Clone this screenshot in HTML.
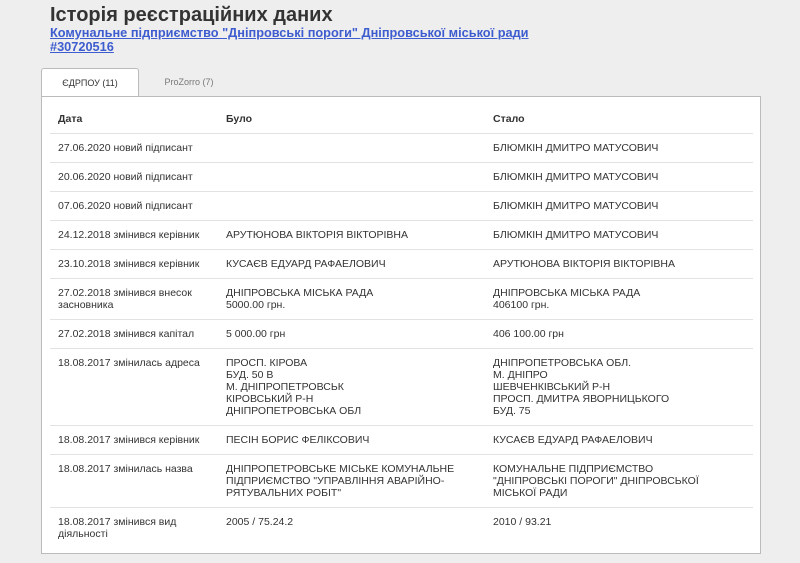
<!DOCTYPE html>
<html><head><meta charset="utf-8"><style>
body{margin:0;background:#eeeeee;font-family:"Liberation Sans",Arial,sans-serif;width:800px;height:563px;overflow:hidden;position:relative}
h1{position:absolute;left:50px;top:3px;margin:0;font-size:20px;font-weight:bold;color:#333;line-height:24px}
.lnk{position:absolute;left:50px;top:26px;font-size:12.75px;font-weight:bold;color:#3d5ccf;text-decoration:underline;line-height:14px}
.tab{position:absolute;top:68px;height:28px;font-size:9px;color:#555;line-height:28px;text-align:center}
.t1{left:41px;width:96px;background:#fff;border:1px solid #bbb;border-bottom:none;border-radius:3px 3px 0 0;color:#333}
.t2{left:140px;width:98px;color:#777}
.panel{position:absolute;left:41px;top:96px;width:718px;height:456px;background:#fff;border:1px solid #bbb}
table{position:absolute;left:8px;top:8px;width:703px;border-collapse:collapse;font-size:10.5px;color:#333}
td,th{padding:8px 8px 8px 8px;line-height:12px;vertical-align:top;text-align:left;border-bottom:1px solid #e2e2e2}
th{font-weight:bold;padding:8px 8px 8px 8px}
tr:last-child td{border-bottom:none}
</style></head><body>
<h1>Історія реєстраційних даних</h1>
<div class="lnk">Комунальне підприємство "Дніпровські пороги" Дніпровської міської ради<br>#30720516</div>
<div class="tab t1">ЄДРПОУ (11)</div>
<div class="tab t2">ProZorro (7)</div>
<div class="panel"><table>
<colgroup><col style="width:168px"><col style="width:267px"><col></colgroup>
<tr><th>Дата</th><th>Було</th><th>Стало</th></tr>
<tr><td>27.06.2020 новий підписант</td><td></td><td>БЛЮМКІН ДМИТРО МАТУСОВИЧ</td></tr>
<tr><td>20.06.2020 новий підписант</td><td></td><td>БЛЮМКІН ДМИТРО МАТУСОВИЧ</td></tr>
<tr><td>07.06.2020 новий підписант</td><td></td><td>БЛЮМКІН ДМИТРО МАТУСОВИЧ</td></tr>
<tr><td>24.12.2018 змінився керівник</td><td>АРУТЮНОВА ВІКТОРІЯ ВІКТОРІВНА</td><td>БЛЮМКІН ДМИТРО МАТУСОВИЧ</td></tr>
<tr><td>23.10.2018 змінився керівник</td><td>КУСАЄВ ЕДУАРД РАФАЕЛОВИЧ</td><td>АРУТЮНОВА ВІКТОРІЯ ВІКТОРІВНА</td></tr>
<tr><td>27.02.2018 змінився внесок<br>засновника</td><td>ДНІПРОВСЬКА МІСЬКА РАДА<br>5000.00 грн.</td><td>ДНІПРОВСЬКА МІСЬКА РАДА<br>406100 грн.</td></tr>
<tr><td>27.02.2018 змінився капітал</td><td>5 000.00 грн</td><td>406 100.00 грн</td></tr>
<tr><td>18.08.2017 змінилась адреса</td><td>ПРОСП. КІРОВА<br>БУД. 50 В<br>М. ДНІПРОПЕТРОВСЬК<br>КІРОВСЬКИЙ Р-Н<br>ДНІПРОПЕТРОВСЬКА ОБЛ</td><td>ДНІПРОПЕТРОВСЬКА ОБЛ.<br>М. ДНІПРО<br>ШЕВЧЕНКІВСЬКИЙ Р-Н<br>ПРОСП. ДМИТРА ЯВОРНИЦЬКОГО<br>БУД. 75</td></tr>
<tr><td>18.08.2017 змінився керівник</td><td>ПЕСІН БОРИС ФЕЛІКСОВИЧ</td><td>КУСАЄВ ЕДУАРД РАФАЕЛОВИЧ</td></tr>
<tr><td>18.08.2017 змінилась назва</td><td>ДНІПРОПЕТРОВСЬКЕ МІСЬКЕ КОМУНАЛЬНЕ<br>ПІДПРИЄМСТВО "УПРАВЛІННЯ АВАРІЙНО-<br>РЯТУВАЛЬНИХ РОБІТ"</td><td>КОМУНАЛЬНЕ ПІДПРИЄМСТВО<br>"ДНІПРОВСЬКІ ПОРОГИ" ДНІПРОВСЬКОЇ<br>МІСЬКОЇ РАДИ</td></tr>
<tr><td>18.08.2017 змінився вид<br>діяльності</td><td>2005 / 75.24.2</td><td>2010 / 93.21</td></tr>
</table></div>
</body></html>
